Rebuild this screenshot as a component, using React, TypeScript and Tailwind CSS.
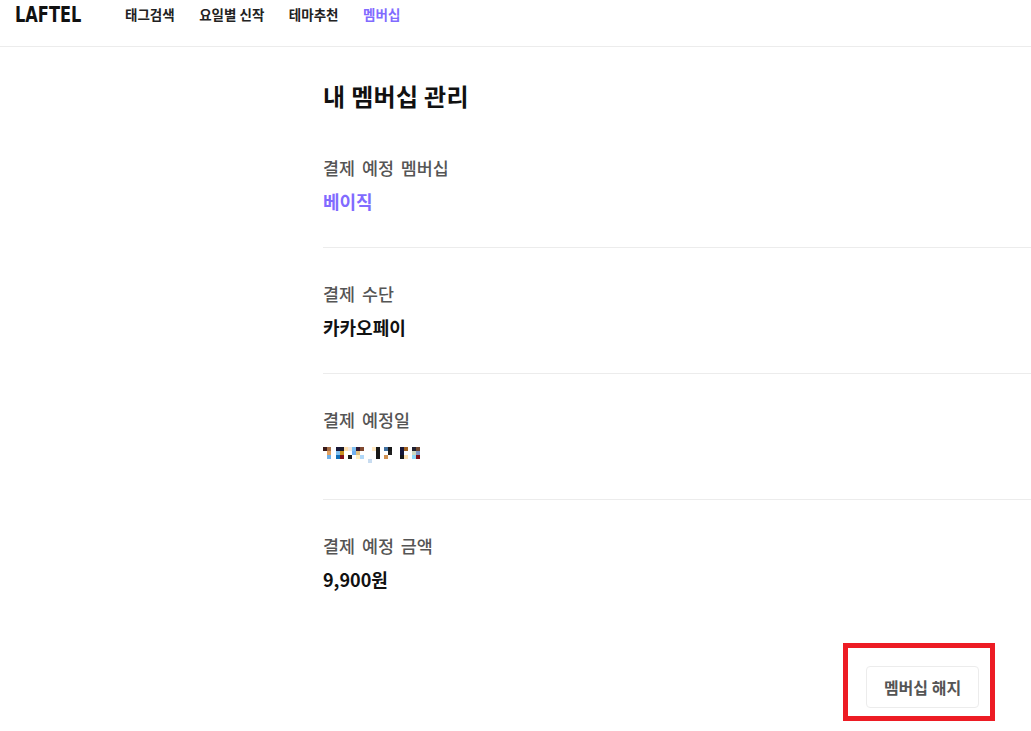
const FONT = "font-['Noto_Sans_CJK_KR','Noto_Sans',sans-serif]";

const navItems = [
  { label: "태그검색" },
  { label: "요일별 신작" },
  { label: "테마추천" },
  { label: "멤버십", active: true },
];

const rows = [
  { label: "결제 예정 멤버십", value: "베이직", tone: "text-[#816bff]" },
  { label: "결제 수단", value: "카카오페이", tone: "text-[#111111]" },
  { label: "결제 예정일", mosaic: true },
  { label: "결제 예정 금액", value: "9,900원", tone: "text-[#111111]", last: true },
];

// censored date in the screenshot, cell colours read off the picture
const cells: [number, number, string][] = [
  [323, 447, "#3a1a18"], [327, 447, "#a87048"], [327, 451, "#e0a060"], [327, 455, "#70b0e8"],
  [336, 447, "#181838"], [340, 447, "#18182a"], [336, 451, "#80c0f0"], [340, 451, "#c89020"], [336, 455, "#1070b8"], [340, 455, "#801018"],
  [344, 447, "#ffe0b0"], [348, 447, "#f0e8e0"], [348, 455, "#181818"],
  [352, 447, "#80c0f0"], [352, 451, "#70b0f0"], [356, 447, "#301830"], [360, 447, "#804830"], [356, 451, "#e0c080"], [356, 455, "#fff0c0"], [360, 455, "#b0d8f8"],
  [368, 459, "#c8dcf0"], [372, 447, "#ffe8c0"], [376, 447, "#181818"], [376, 451, "#181818"], [376, 455, "#181818"],
  [384, 447, "#4070a0"], [388, 447, "#181818"], [388, 451, "#202020"], [384, 455, "#d09050"],
  [400, 447, "#181838"], [404, 447, "#a06020"], [400, 451, "#181838"], [400, 455, "#181818"], [404, 455, "#ffe0b0"],
  [412, 447, "#202030"], [416, 447, "#704830"], [412, 451, "#d0d8c0"], [416, 451, "#8098c8"], [412, 455, "#90d8f8"], [416, 455, "#801018"],
];

function Mosaic() {
  return (
    <svg width="98" height="16" viewBox="323 447 98 16" className="block" aria-label="가려진 날짜">
      {cells.map(([x, y, fill], i) => (
        <rect key={i} x={x} y={y} width="4" height="4" fill={fill} />
      ))}
    </svg>
  );
}

export default function App() {
  return (
    <div className={`${FONT} h-[731px] w-[1031px] overflow-hidden bg-white`}>
      <header className="flex h-[47px] items-start border-b border-[#ececec]">
        <span className="ml-[15px] mt-[3px] inline-block w-[68px] origin-left scale-x-[0.79] whitespace-nowrap font-['DejaVu_Sans',sans-serif] text-[20.5px] font-bold leading-[24px] text-[#111111]">
          LAFTEL
        </span>
        <nav className="ml-[42px] mt-[4px] flex gap-[24.5px] text-[13.5px] font-bold leading-[20px]">
          {navItems.map((item) => (
            <span key={item.label} className={item.active ? "text-[#816bff]" : "text-[#222222]"}>
              {item.label}
            </span>
          ))}
        </nav>
      </header>

      <main className="ml-[323px]">
        <h1 className="pt-[33px] text-[24px] font-bold leading-[32px] tracking-[0.3px] text-[#111111]">내 멤버십 관리</h1>

        <div className="mt-[44px]">
          {rows.map((row) => (
            <section
              key={row.label}
              className={row.last ? "h-[126px]" : "mb-[34px] h-[92px] border-b border-[#ececec]"}
            >
              <p className="text-[17.4px] font-medium leading-[24px] text-[#555555] [word-spacing:3px]">{row.label}</p>
              {row.mosaic ? (
                <div className="mt-[15px]">
                  <Mosaic />
                </div>
              ) : (
                <p className={`mt-[8px] text-[18px] font-bold leading-[26px] ${row.tone}`}>{row.value}</p>
              )}
            </section>
          ))}
        </div>
      </main>

      <div className="ml-[843px] mt-[-17px] flex h-[78px] w-[152px] items-start justify-end border-[5px] border-[#ed1c24] pr-[11px] pt-[18px]">
        <button className="h-[42px] w-[113px] rounded-[4px] border border-[#ececec] bg-white text-[16px] font-bold text-[#555555]">
          멤버십 해지
        </button>
      </div>
    </div>
  );
}
